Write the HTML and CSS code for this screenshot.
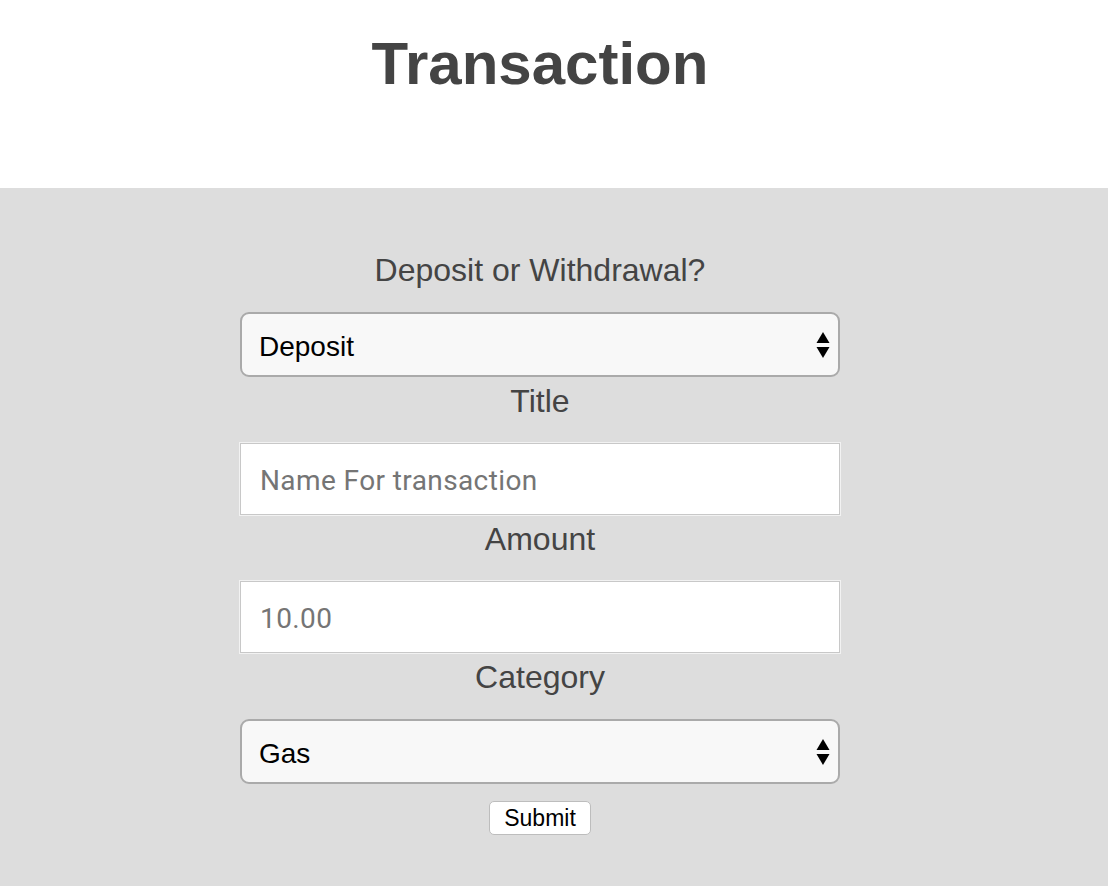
FILE: index.html
```html
<!DOCTYPE html>
<html lang="en">
<head>
<meta charset="utf-8">
<title>Transaction</title>
<link rel="stylesheet" href="styles.css">
</head>
<body>
<header class="top">
  <h1 class="title">Transaction</h1>
</header>
<main class="panel">
  <form class="form">
    <label class="label label-first" for="kind">Deposit or Withdrawal?</label>
    <div class="select-wrap">
      <select id="kind" class="select">
        <option>Deposit</option>
        <option>Withdrawal</option>
      </select>
      <svg class="arrows" width="14" height="26" viewBox="0 0 14 26" aria-hidden="true">
        <polygon points="7,0 13.5,11 0.5,11" fill="#000"/>
        <polygon points="0.5,15 13.5,15 7,26" fill="#000"/>
      </svg>
    </div>

    <label class="label" for="title">Title</label>
    <input id="title" class="input" type="text" placeholder="Name For transaction">

    <label class="label" for="amount">Amount</label>
    <input id="amount" class="input" type="text" placeholder="10.00">

    <label class="label" for="category">Category</label>
    <div class="select-wrap">
      <select id="category" class="select">
        <option>Gas</option>
        <option>Food</option>
        <option>Rent</option>
      </select>
      <svg class="arrows" width="14" height="26" viewBox="0 0 14 26" aria-hidden="true">
        <polygon points="7,0 13.5,11 0.5,11" fill="#000"/>
        <polygon points="0.5,15 13.5,15 7,26" fill="#000"/>
      </svg>
    </div>

    <button class="submit" type="button">Submit</button>
  </form>
</main>
</body>
</html>
```
FILE: styles.css
```css
html, body {
  margin: 0;
  padding: 0;
}
body {
  font-family: "Liberation Sans", Arial, sans-serif;
  background: #dddddd;
  min-height: 886px;
}
.top {
  background: #ffffff;
  height: 188px;
  box-sizing: border-box;
  padding: 29px 28px 0 0;
}
.title {
  margin: 0;
  text-align: center;
  font-size: 60px;
  line-height: 69px;
  font-weight: bold;
  color: #444444;
}
.panel {
  background: #dddddd;
  padding: 64px 28px 60px 0;
}
.form {
  width: 600px;
  margin: 0 auto;
  display: flex;
  flex-direction: column;
  align-items: center;
}
.label {
  display: block;
  width: 100%;
  text-align: center;
  font-size: 32px;
  line-height: 37px;
  color: #444444;
  margin: 6px 0 23px;
}
.label-first {
  margin-top: 0;
}
.select-wrap {
  position: relative;
  width: 100%;
}
.select {
  -webkit-appearance: none;
  appearance: none;
  display: block;
  width: 100%;
  height: 65px;
  box-sizing: border-box;
  margin: 0;
  padding: 3px 40px 0 17px;
  border: 2px solid #aaaaaa;
  border-radius: 9px;
  background: #f8f8f8;
  color: #000000;
  font-family: "Liberation Sans", Arial, sans-serif;
  font-size: 28px;
}
.arrows {
  position: absolute;
  right: 10px;
  top: 20px;
  pointer-events: none;
}
.input {
  display: block;
  width: 100%;
  height: 72px;
  box-sizing: border-box;
  margin: 0;
  padding: 2px 20px 0 19px;
  border: 1px solid #c8c8c8;
  box-shadow: inset 0 0 0 1px #ffffff;
  outline: 1px solid #f2f2f2;
  background: #ffffff;
  font-family: Roboto, "Liberation Sans", sans-serif;
  font-size: 28px;
  letter-spacing: 0.4px;
  color: #333333;
}
.input::placeholder {
  color: #757575;
}
.submit {
  margin-top: 17px;
  width: 102px;
  height: 34px;
  padding: 0;
  border: 1px solid #bdbdbd;
  border-radius: 5px;
  background: #ffffff;
  color: #000000;
  font-family: "Liberation Sans", Arial, sans-serif;
  font-size: 23px;
}
```
